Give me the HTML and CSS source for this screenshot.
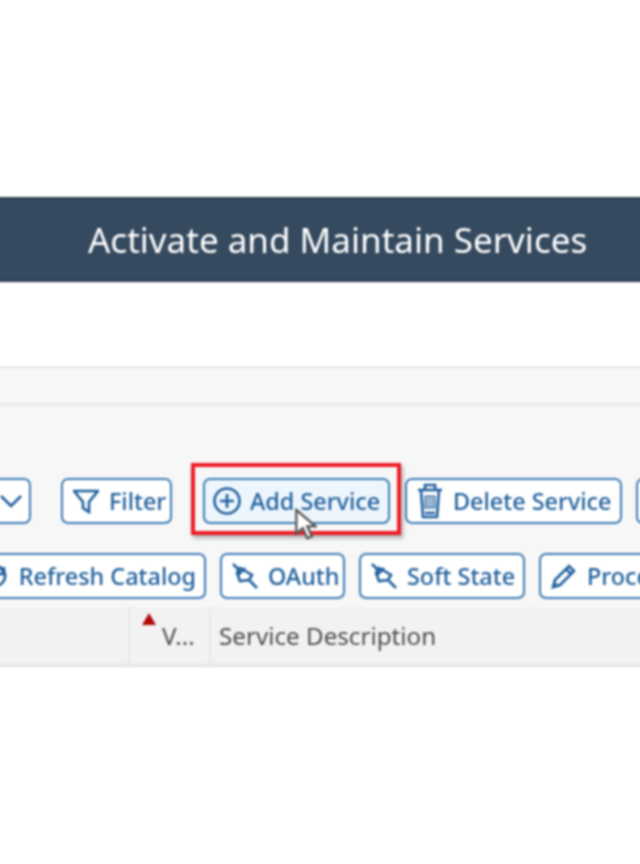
FILE: index.html
```html
<!DOCTYPE html>
<html lang="en">
<head>
<meta charset="utf-8">
<title>Activate and Maintain Services</title>
<link rel="stylesheet" href="styles.css">
</head>
<body>
<div class="page">
  <header class="title-bar"><h1>Activate and Maintain Services</h1></header>
  <div class="menu-strip"></div>
  <section class="toolbar">
    <div class="row row-one">
      <button class="btn btn-menu"><svg class="ico" viewBox="0 0 26 26"><path d="M3 8l10 10L23 8"/></svg></button>
      <span class="sep"></span>
      <button class="btn btn-filter"><svg class="ico" viewBox="0 0 26 26"><path d="M1 3h24l-9 11v10l-6-4v-6z"/></svg>Filter</button>
      <div class="add-wrap">
        <button class="btn btn-add"><svg class="ico ico-plus" viewBox="0 0 28 28"><circle cx="14" cy="14" r="12.5"/><path d="M14 7v14M7 14h14"/></svg>Add Service</button>
        <span class="highlight"></span>
        <svg class="cursor" viewBox="0 0 24 36"><path d="M2 2v26l7-6 5 11 5-2-5-11h9z"/></svg>
      </div>
      <button class="btn btn-delete"><svg class="ico ico-trash" viewBox="0 0 26 36"><path d="M1 7h24M8 7V2h10v5M4 7l2 27h14l2-27"/><path class="fill" d="M8 13h10v12H8z"/><path d="M8 30h10"/></svg>Delete Service</button>
      <button class="btn btn-more"></button>
    </div>
    <div class="row row-two">
      <button class="btn btn-refresh"><svg class="ico ico-refresh" viewBox="0 0 26 26"><path d="M13 3a10 10 0 1 1-9 14M22 4v7h-7M13 3c4 0 7 3 9 8"/></svg>Refresh Catalog</button>
      <button class="btn btn-oauth"><svg class="ico" viewBox="0 0 26 26"><path d="M1 1l6 6M18 18l7 7M8 5l12 7-3 5-9 1-3-8zM5 13l8-8"/></svg>OAuth</button>
      <button class="btn btn-soft"><svg class="ico" viewBox="0 0 26 26"><path d="M1 1l6 6M18 18l7 7M8 5l12 7-3 5-9 1-3-8zM5 13l8-8"/></svg>Soft State</button>
      <button class="btn btn-proc"><svg class="ico" viewBox="0 0 26 26"><path d="M2 24l2-7L18 3l5 5L9 22zM15 6l5 5"/><path class="fill" d="M2 24l1-6 5 5z"/></svg>Process</button>
    </div>
  </section>
  <div class="table-head">
    <div class="cell cell-blank"></div>
    <div class="cell cell-version"><span class="sort"></span>V...</div>
    <div class="cell cell-desc">Service Description</div>
  </div>
</div>
</body>
</html>
```
FILE: styles.css
```css
* { box-sizing: border-box; }
html, body { margin: 0; background: #fff; }
body { width: 640px; height: 864px; overflow: hidden; font-family: "Noto Sans", "Liberation Sans", sans-serif; }
.page { width: 680px; margin-left: -20px; padding-top: 197px; filter: blur(0.9px); }
.title-bar {
  height: 85px; background: #354a5f; display: flex; align-items: center; padding-left: 108px;
  border-top: 2px solid #2c3f52; border-bottom: 2px solid #2c3f52;
}
.title-bar h1 { margin: 0; color: #fff; font-size: 35px; font-weight: 400; white-space: nowrap; }
.menu-strip { margin-top: 84px; height: 40px; background: #f7f7f7; border-top: 3px solid #ececec; border-bottom: 3px solid #ececec; }
.toolbar { height: 201px; background: #f7f7f7; padding-top: 72px; overflow: hidden; }
.row { display: flex; align-items: center; height: 46px; white-space: nowrap; }
.row-one { margin-left: -38px; }
.row-two { margin-top: 29px; margin-left: -30px; gap: 14px; }
.btn {
  height: 46px; flex: none; display: flex; align-items: center; padding: 0 10px;
  background: #fff; border: 2.5px solid #3a7ab4; border-radius: 7px; color: #1f5f9c;
  font: 500 23.4px "Noto Sans", "Liberation Sans", sans-serif;
}
.ico { width: 26px; height: 26px; flex: none; fill: none; stroke: currentColor; stroke-width: 2.6; margin-right: 10px; }
.fill { fill: currentColor; fill-opacity: .45; stroke-width: 1; }
.btn-menu { width: 89px; justify-content: flex-end; padding-right: 5px; }
.btn-menu .ico { margin-right: 0; }
.sep { width: 2px; height: 46px; margin: 0 17px 0 13px; background: #e8e8e8; }
.btn-filter { width: 111px; }
.add-wrap { position: relative; margin: 0 15px 0 31px; }
.btn-add { width: 187px; background: #eef6fd; padding: 0 8px; }
.ico-plus { width: 28px; height: 28px; margin-right: 9px; }
.ico-trash { width: 26px; height: 36px; margin-right: 10px; }
.highlight { position: absolute; left: -12px; top: -15px; width: 210px; height: 72px; border: 4px solid #ee1c25; box-shadow: 2px 3px 4px rgba(0,0,0,.3); }
.cursor { position: absolute; left: 91px; top: 30px; width: 23px; height: 33px; fill: #fff; stroke: #555; stroke-width: 2.5; }
.btn-delete { width: 217px; }
.btn-more { width: 30px; margin-left: 14px; }
.btn-refresh { width: 256px; justify-content: flex-end; padding-right: 8px; }
.ico-refresh { margin-right: 11px; }
.btn-oauth { width: 125px; }
.btn-soft { width: 166px; }
.btn-proc { width: 160px; }
.table-head { height: 60px; background: #f2f2f2; border-bottom: 3px solid #e4e4e4; display: flex; color: #4f4f4f; font-size: 24.2px; }
.cell { display: flex; align-items: center; height: 100%; border-right: 2px solid #e8e8e8; position: relative; }
.cell-blank { width: 150px; }
.cell-version { width: 81px; padding-left: 32px; }
.cell-desc { padding-left: 8px; border-right: 0; white-space: nowrap; }
.sort { position: absolute; left: 12px; top: 6px; border: 7px solid transparent; border-top: 0; border-bottom: 12px solid #b00b0b; }
```
